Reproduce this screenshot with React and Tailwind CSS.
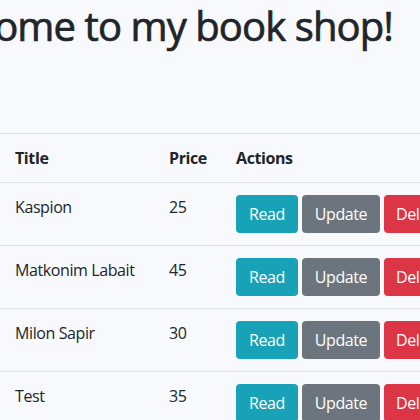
import React from 'react';

const books = [
  { title: 'Kaspion', price: 25 },
  { title: 'Matkonim Labait', price: 45 },
  { title: 'Milon Sapir', price: 30 },
  { title: 'Test', price: 35 },
];

const btn = 'h-[38px] rounded-[4px] text-[16px] leading-6 text-white text-center shrink-0';

const App = () => {
  return (
    <div className="min-h-screen w-[420px] overflow-hidden bg-[#f8f9fc] text-[#212529] tracking-[-0.4px]" style={{ fontFamily: '"Open Sans", "Noto Sans", sans-serif' }}>
      {/* Heading, wider than the window so it spills off the left edge */}
      <div className="flex justify-end pr-[27px] h-[133px] overflow-hidden">
        <h1 className="whitespace-nowrap text-[40px] leading-[48px] font-normal tracking-[-0.9px] [-webkit-text-stroke:0.7px_#212529] mt-[2px]">Welcome to my book shop!</h1>
      </div>

      {/* Books table */}
      <div className="border-t border-[#dee2e6] text-[16px] leading-6">
        <div className="grid grid-cols-[154px_67px_1fr] border-b border-[#dee2e6] pl-[3px]">
          <div className="p-3 font-bold">Title</div>
          <div className="p-3 font-bold">Price</div>
          <div className="p-3 font-bold">Actions</div>
        </div>
        {books.map((b) => (
          <div key={b.title} className="grid grid-cols-[154px_67px_1fr] border-b border-[#dee2e6] pl-[3px]">
            <div className="p-3 whitespace-nowrap">{b.title}</div>
            <div className="p-3">{b.price}</div>
            <div className="p-3 flex gap-[4px]">
              <button className={`${btn} w-[62px] bg-[#17a2b8]`}>Read</button>
              <button className={`${btn} w-[78px] bg-[#6c757d]`}>Update</button>
              <button className={`${btn} w-[70px] bg-[#dc3545]`}>Delete</button>
            </div>
          </div>
        ))}
      </div>
    </div>
  );
};

export default App;
